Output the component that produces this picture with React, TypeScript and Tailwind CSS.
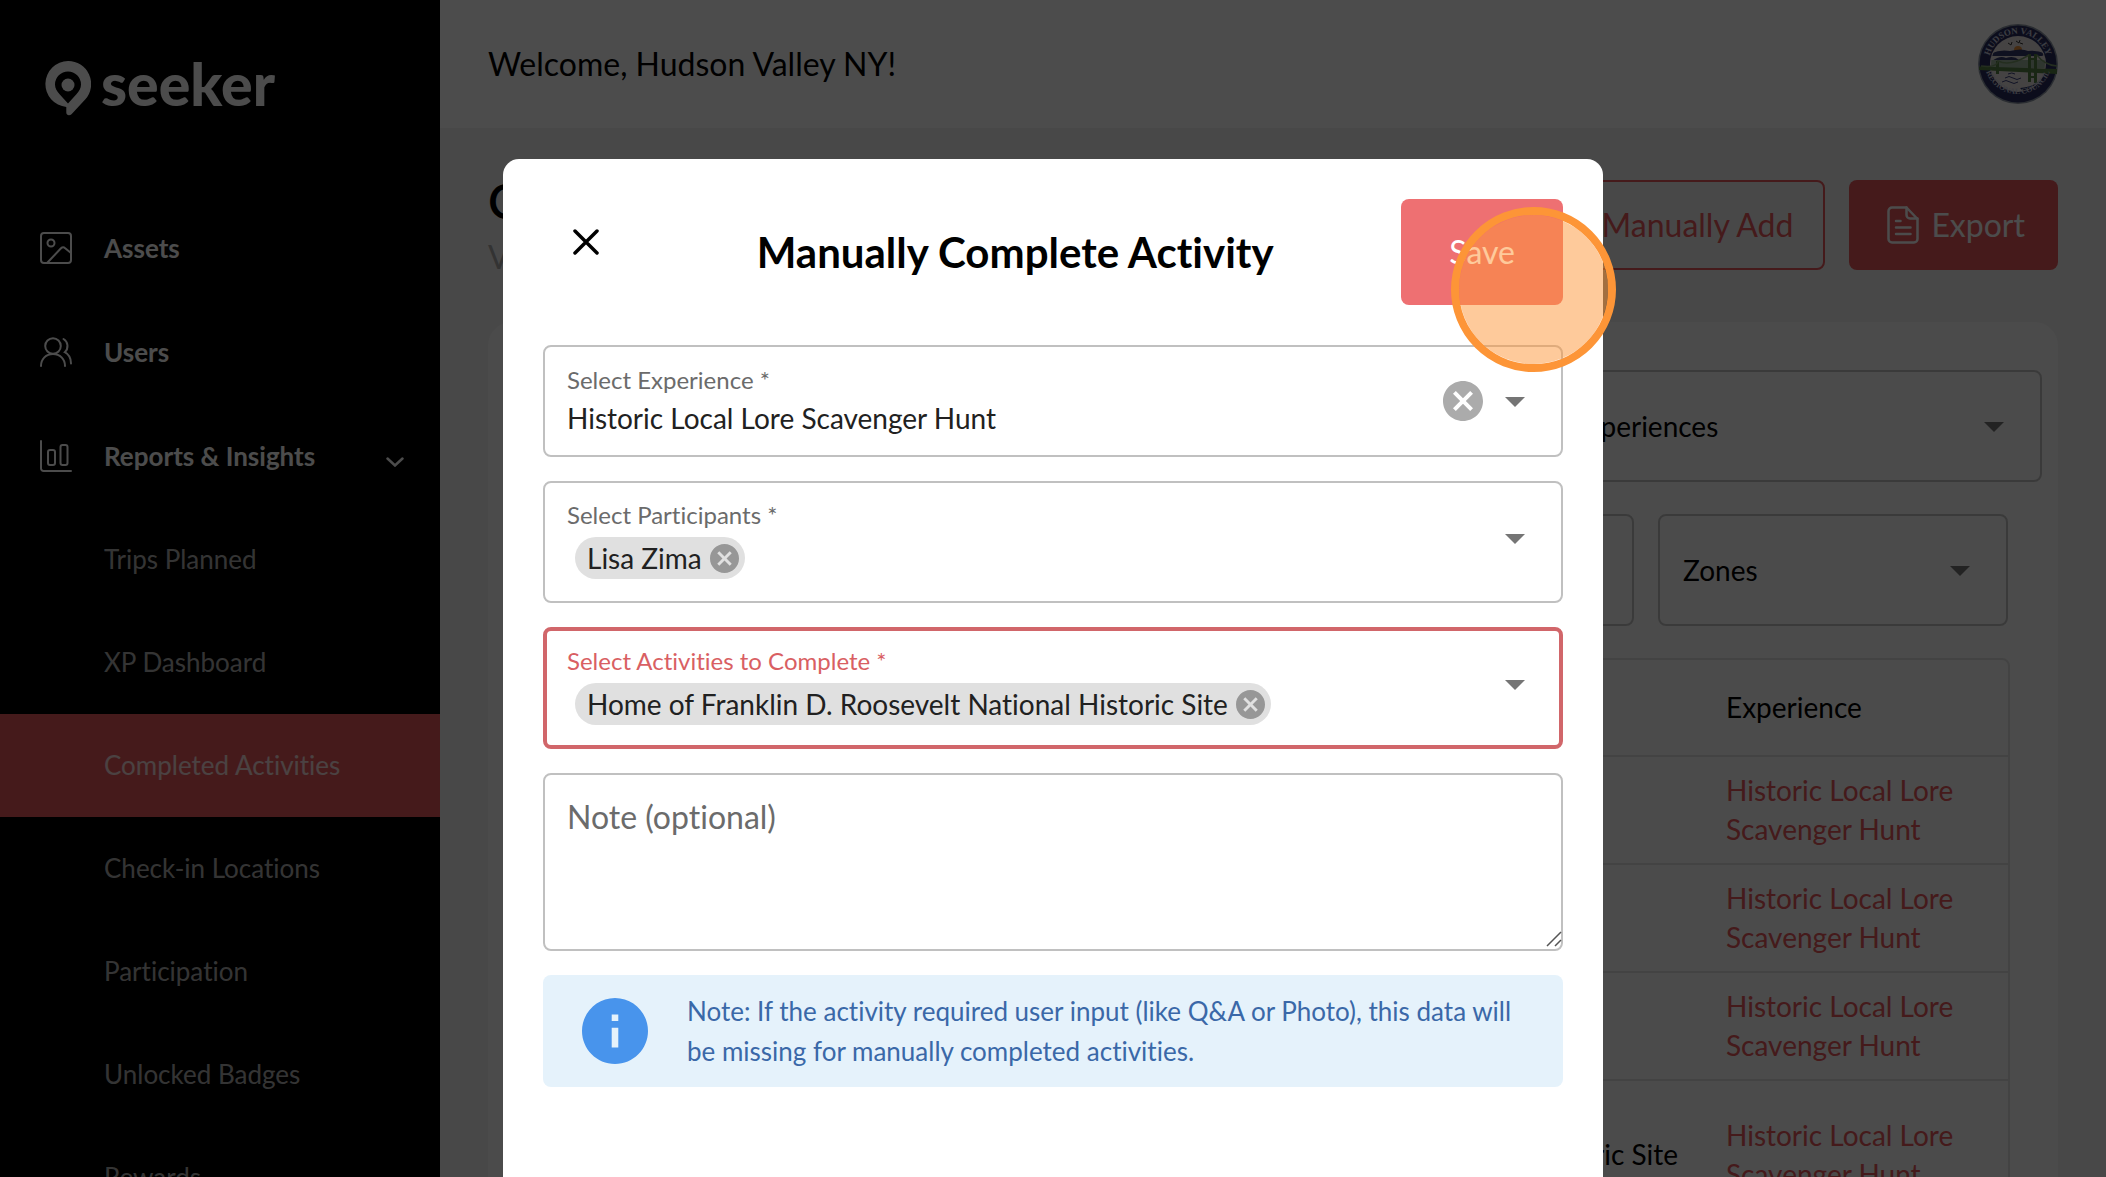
import { useState } from 'react';
import type { ReactNode } from 'react';
import clsx from 'clsx';

const subItems = [
  'Trips Planned',
  'XP Dashboard',
  'Completed Activities',
  'Check-in Locations',
  'Participation',
  'Unlocked Badges',
  'Rewards',
];

const rows = [
  { id: 1, activity: '' },
  { id: 2, activity: '' },
  { id: 3, activity: '' },
  { id: 4, activity: 'Historic Site' },
];

const Logo = () => (
  <a href="#" className="flex items-start gap-[10px] text-white">
    <svg viewBox="0 0 46 56" className="h-14 w-[46px]" fill="currentColor" aria-hidden="true">
      <path
        fillRule="evenodd"
        d="M23 0a23 23 0 0 1 17.400 38.200L26.500 53.200c-2 2.100-5.200 1.200-5.200-1.600v-5.700A23 23 0 0 1 23 0Zm0 10.500a13 13 0 0 0-13 13c0 4 2 6.800 4.600 9.700L23 42.600l8.400-9.400C34 30.300 36 27.500 36 23.500a13 13 0 0 0-13-13Z"
      />
      <circle cx="23" cy="24" r="6.500" />
    </svg>
    <span className="text-[59px] leading-[46px] font-black">seeker</span>
  </a>
);

const ImageIcon = () => (
  <svg viewBox="0 0 32 32" className="size-8" fill="none" stroke="currentColor" strokeWidth="2" strokeLinejoin="round" strokeLinecap="round" aria-hidden="true">
    <rect x="1" y="1" width="30" height="30" rx="3" />
    <circle cx="11" cy="11" r="3.500" />
    <path d="M7.500 30.500 21 16.300a3 3 0 0 1 4.200-.1L31 21" />
  </svg>
);

const UsersIcon = () => (
  <svg viewBox="0 0 32 32" className="size-8" fill="none" stroke="currentColor" strokeWidth="2" strokeLinecap="round" aria-hidden="true">
    <circle cx="13" cy="10" r="7.800" />
    <path d="M1 30c0-7 5-12 12-12s12 5 12 12" />
    <path d="M23.500 3c4.800 2.800 5.300 9.500 1.300 13.200 3.700 2 6.200 6.500 6.200 11.300" />
  </svg>
);

const ChartIcon = () => (
  <svg viewBox="0 0 32 32" className="size-8" fill="none" stroke="currentColor" strokeWidth="2" strokeLinecap="round" strokeLinejoin="round" aria-hidden="true">
    <path d="M1 1v27.500A2.500 2.500 0 0 0 3.500 31H31" />
    <rect x="8" y="10" width="7" height="15" rx="2" />
    <rect x="20.500" y="5" width="7" height="20" rx="2" />
  </svg>
);

const DocIcon = () => (
  <svg viewBox="0 0 32 38" className="h-[38px] w-8" fill="none" stroke="currentColor" strokeWidth="2.500" strokeLinejoin="round" strokeLinecap="round" aria-hidden="true">
    <path d="M5 1.500h14.500L30.500 13v20a3.500 3.500 0 0 1-3.500 3.500H5A3.500 3.500 0 0 1 1.500 33V5A3.500 3.500 0 0 1 5 1.500Z" />
    <path d="M19.500 1.500V9a3.500 3.500 0 0 0 3.500 3.500h7.500M9 15h4.500M9 21.500h14.500M9 28h14.500" />
  </svg>
);

const Caret = ({ className }: { className?: string }) => (
  <svg viewBox="0 0 24 24" className={clsx('size-12 shrink-0 text-[#757575]', className)} fill="currentColor" aria-hidden="true">
    <path d="m7 10 5 5 5-5z" />
  </svg>
);

const CrossCircle = ({ className }: { className: string }) => (
  <svg viewBox="2 2 20 20" className={className} fill="currentColor" aria-hidden="true">
    <path d="M12 2C6.470 2 2 6.470 2 12s4.470 10 10 10 10-4.470 10-10S17.530 2 12 2zm5 13.590L15.590 17 12 13.410 8.410 17 7 15.590 10.590 12 7 8.410 8.410 7 12 10.590 15.590 7 17 8.410 13.410 12 17 15.590z" />
  </svg>
);

const Avatar = () => (
  <svg viewBox="0 0 80 80" className="size-20" role="img" aria-label="Hudson Valley Regional Council">
    <defs>
      <path id="arc-top" d="M11.500 44a29 29 0 1 1 57 0" />
      <path id="arc-bottom" d="M6.500 42a34 34 0 0 0 67 0" />
      <clipPath id="avatar-inner">
        <circle cx="40" cy="40" r="27" />
      </clipPath>
    </defs>
    <circle cx="40" cy="40" r="40" fill="#8d97a5" />
    <circle cx="40" cy="40" r="38.500" fill="#2b2e60" />
    <circle cx="40" cy="40" r="28" fill="#e8e0e0" />
    <g clipPath="url(#avatar-inner)">
      <circle cx="40" cy="26" r="4" fill="#e8913c" />
      <path d="M12 30q10-5 20-3 12-3 18 0 10-1 18 3l-4 2H14z" fill="#34396c" />
      <path d="M14 37q8-6 14-3 8-3 13 2l5 3H14z" fill="#34396c" />
      <path d="M12 36h56v8H12z" fill="#9fb59f" />
      <path d="M42 64q14-1 20-8l-3 9-12 4z" fill="#2b2e60" />
      <path d="M27 54q4-3 8 0t8 0M24 58q4-3 8 0t8 0M30 50q4-2 7 0" stroke="#3a427c" strokeWidth="1" fill="none" />
      <path d="m30 19 3 2 1-3m4-1 3 2 1-3m0 3 3 1" stroke="#333" strokeWidth="1" fill="none" />
    </g>
    <path d="M1 42.500 79 45v5L1 46z" fill="#568045" />
    <path d="M50 30h3v28h-3zM56 30h3v29h-3zM50 34h8v2h-8zM18 37h3v13h-3zM50 52h8v2h-8z" fill="#568045" />
    <path d="M3 42q16 2 17-5 12 6 31-6M59 31q7 10 20 11" stroke="#789a6a" strokeWidth="1.500" fill="none" />
    <g className="font-['Liberation_Serif',serif] text-[9px] font-bold" fill="#c6c9dc">
      <text textAnchor="middle">
        <textPath href="#arc-top" startOffset="50%">HUDSON VALLEY</textPath>
      </text>
      <text textAnchor="middle" className="text-[8px]">
        <textPath href="#arc-bottom" startOffset="50%">REGIONAL COUNCIL</textPath>
      </text>
    </g>
  </svg>
);

const NavItem = ({ icon, label, children }: { icon: ReactNode; label: string; children?: ReactNode }) => (
  <a href="#" className="flex h-[104px] items-center pr-9 pl-10 text-[26px] font-bold text-white">
    {icon}
    <span className="ml-8 flex-1">{label}</span>
    {children}
  </a>
);

const Sidebar = () => (
  <nav className="w-[440px] shrink-0 bg-black">
    <div className="h-[196px] pt-[61px] pl-[45px]">
      <Logo />
    </div>
    <NavItem icon={<ImageIcon />} label="Assets" />
    <NavItem icon={<UsersIcon />} label="Users" />
    <NavItem icon={<ChartIcon />} label="Reports & Insights">
      <svg viewBox="0 0 18 10" className="mt-3 h-[10px] w-[18px]" fill="none" stroke="currentColor" strokeWidth="2.500" strokeLinecap="round" aria-hidden="true">
        <path d="m1.500 1.500 7.500 7 7.500-7" />
      </svg>
    </NavItem>
    {subItems.map((item) => (
      <a
        key={item}
        href="#"
        className={clsx(
          'flex h-[103px] items-center pl-[104px] text-[26px]',
          item === 'Completed Activities' ? 'bg-[#e6575a] text-white/80' : 'text-white/70'
        )}
      >
        {item}
      </a>
    ))}
  </nav>
);

const FilterSelect = ({ label, showLabel = true }: { label: string; showLabel?: boolean }) => (
  <div className="relative flex-1">
    <select aria-label={label} className="h-28 w-full appearance-none rounded-lg border-2 border-[#c4c4c4] px-[23px] text-[28px] text-black">
      <option>{showLabel ? label : ''}</option>
    </select>
    <Caret className="pointer-events-none absolute top-8 right-6" />
  </div>
);

const ActivityTable = () => (
  <div className="rounded-lg border-2 border-[#e0e0e0]">
    <table className="w-full table-fixed text-left text-[28px] leading-[39px] text-black">
      <thead>
        <tr className="h-24 border-b-2 border-[#e0e0e0]">
          <th aria-label="Activity" />
          <th className="w-[306px] px-6 font-normal">Experience</th>
        </tr>
      </thead>
      <tbody>
        {rows.map((row) => (
          <tr key={row.id} className={clsx('border-b-2 border-[#e0e0e0]', row.activity ? 'h-[149px]' : 'h-[108px]')}>
            <td className="px-6 text-right">{row.activity}</td>
            <td className="px-6">
              <a href="#" className="text-[#e6575a]">Historic Local Lore Scavenger Hunt</a>
            </td>
          </tr>
        ))}
      </tbody>
    </table>
  </div>
);

const Dashboard = () => (
  <div className="flex min-w-0 flex-1 flex-col bg-[#f2f2f2]">
    <header className="flex h-32 shrink-0 items-center justify-between bg-white px-12">
      <p className="text-[32px] text-black">Welcome, Hudson Valley NY!</p>
      <Avatar />
    </header>
    <main className="px-12 pt-[41px]">
      <div className="flex items-center justify-between">
        <div>
          <h1 className="text-[48px] leading-[64px] font-semibold text-black">Completed Activities</h1>
          <p className="text-[32px] leading-[48px] text-[#aaa]">View completed activities</p>
        </div>
        <div className="flex gap-6 text-[32px]">
          <button type="button" className="h-[90px] rounded-lg border-2 border-[#e6575a] px-[30px] text-[#e6575a]">
            Manually Add
          </button>
          <button type="button" className="flex h-[90px] items-center gap-3 rounded-lg bg-[#e6575a] pr-[33px] pl-[38px] text-white">
            <DocIcon />
            Export
          </button>
        </div>
      </div>
      <section className="mt-[41px] rounded-3xl bg-[#fcfcfc] px-4 pt-12">
        <div className="flex gap-6">
          <FilterSelect label="Users" showLabel={false} />
          <FilterSelect label="Activities" showLabel={false} />
          <FilterSelect label="Experiences" />
        </div>
        <div className="mt-8 flex gap-6 pr-[34px] pl-8">
          <FilterSelect label="Status" showLabel={false} />
          <FilterSelect label="Start Date" showLabel={false} />
          <FilterSelect label="End Date" showLabel={false} />
          <FilterSelect label="Zones" />
        </div>
        <div className="mt-8 px-8">
          <ActivityTable />
        </div>
      </section>
    </main>
  </div>
);

type ChipFieldProps = { id: string; label: string; value: string; focused?: boolean };

const ChipField = ({ id, label, value, focused }: ChipFieldProps) => {
  const [chips, setChips] = useState([value]);

  return (
    <div
      className={clsx(
        'flex h-[122px] items-center rounded-lg pb-2',
        focused ? 'border-4 border-[#d1666a] px-5' : 'border-2 border-[#c0c0c0] px-[22px]'
      )}
    >
      <div className="min-w-0 flex-1">
        <label htmlFor={id} className={clsx('block text-[24px] leading-9', focused ? 'text-[#d95f63]' : 'text-[#6b6b6b]')}>
          {label}
        </label>
        <div className="mt-1 flex items-center pl-2">
          {chips.map((chip) => (
            <span key={chip} className="flex h-[42px] items-center gap-2 rounded-full bg-[#e0e0e0] pr-[6px] pl-3 text-[28px] whitespace-nowrap text-[#212121]">
              {chip}
              <button type="button" aria-label={`Remove ${chip}`} onClick={() => setChips(chips.filter((c) => c !== chip))}>
                <CrossCircle className="size-[29px] text-[#979797]" />
              </button>
            </span>
          ))}
          <input id={id} type="text" className="w-10 min-w-0 flex-1 bg-transparent text-[28px] leading-10 outline-none" />
        </div>
      </div>
      <Caret />
    </div>
  );
};

const CompleteActivityModal = () => {
  const [note, setNote] = useState('');

  return (
    <div role="dialog" aria-modal="true" aria-labelledby="modal-title" className="mt-[159px] min-h-screen w-[1100px] rounded-2xl bg-white p-10">
      <div className="flex items-center">
        <button type="button" aria-label="Close" className="-mt-5 ml-[30px]">
          <svg viewBox="0 0 26 26" className="size-[26px]" fill="none" stroke="black" strokeWidth="3.500" strokeLinecap="round" aria-hidden="true">
            <path d="m2 2 22 22M24 2 2 24" />
          </svg>
        </button>
        <h2 id="modal-title" className="flex-1 pl-[30px] text-center text-[42px] leading-[56px] font-bold text-black">
          Manually Complete Activity
        </h2>
        <div className="relative">
          <button type="button" className="h-[106px] rounded-lg bg-[#ee7072] px-12 text-[32px] text-white">
            Save
          </button>
          <span className="pointer-events-none absolute top-2 left-[50px] z-10 size-[165px] rounded-full border-8 border-[#fd9537] bg-[#fd9537]/50 bg-clip-padding" />
        </div>
      </div>

      <form className="mt-10 flex flex-col gap-6">
        <div className="flex h-28 items-center rounded-lg border-2 border-[#c0c0c0] px-[22px]">
          <div className="min-w-0 flex-1 pb-[3px]">
            <label htmlFor="experience" className="block text-[24px] leading-9 text-[#6b6b6b]">
              Select Experience *
            </label>
            <select id="experience" className="block w-full appearance-none text-[28px] leading-10 text-[#212121]">
              <option>Historic Local Lore Scavenger Hunt</option>
            </select>
          </div>
          <button type="button" aria-label="Clear" className="mr-2">
            <CrossCircle className="size-10 text-[#ababab]" />
          </button>
          <Caret />
        </div>

        <ChipField id="participants" label="Select Participants *" value="Lisa Zima" />
        <ChipField
          id="activities"
          label="Select Activities to Complete *"
          value="Home of Franklin D. Roosevelt National Historic Site"
          focused
        />

        <div className="relative">
          <textarea
            aria-label="Note (optional)"
            placeholder="Note (optional)"
            value={note}
            onChange={(e) => setNote(e.target.value)}
            className="block h-[178px] w-full resize-none rounded-lg border-2 border-[#c0c0c0] px-[22px] py-5 text-[32px] leading-[44px] placeholder:text-[#6b6b6b]"
          />
          <svg viewBox="0 0 16 16" className="absolute right-px bottom-1 size-4" stroke="#555" strokeWidth="1.500" aria-hidden="true">
            <path d="M1 15 15 1M9 15l6-6" />
          </svg>
        </div>

        <div className="flex items-center gap-[39px] rounded-lg bg-[#e5f2fb] py-4 pr-12 pl-[39px]">
          <svg viewBox="2 2 20 20" className="size-[66px] shrink-0 text-[#4894ec]" fill="currentColor" aria-hidden="true">
            <path d="M12 2C6.480 2 2 6.480 2 12s4.480 10 10 10 10-4.480 10-10S17.520 2 12 2zm1 15h-2v-6h2v6zm0-8h-2V7h2v2z" />
          </svg>
          <p className="text-[26px] leading-10 text-[#3a68a8]">
            Note: If the activity required user input (like Q&amp;A or Photo), this data will be missing for manually completed activities.
          </p>
        </div>
      </form>
    </div>
  );
};

const App = () => (
  <div className="relative h-screen overflow-hidden font-[Lato,sans-serif] [font-variant-ligatures:none]">
    <div className="flex min-h-full">
      <Sidebar />
      <Dashboard />
    </div>
    <div className="absolute inset-0 flex items-start justify-center overflow-hidden bg-black/70">
      <CompleteActivityModal />
    </div>
  </div>
);

export default App;
